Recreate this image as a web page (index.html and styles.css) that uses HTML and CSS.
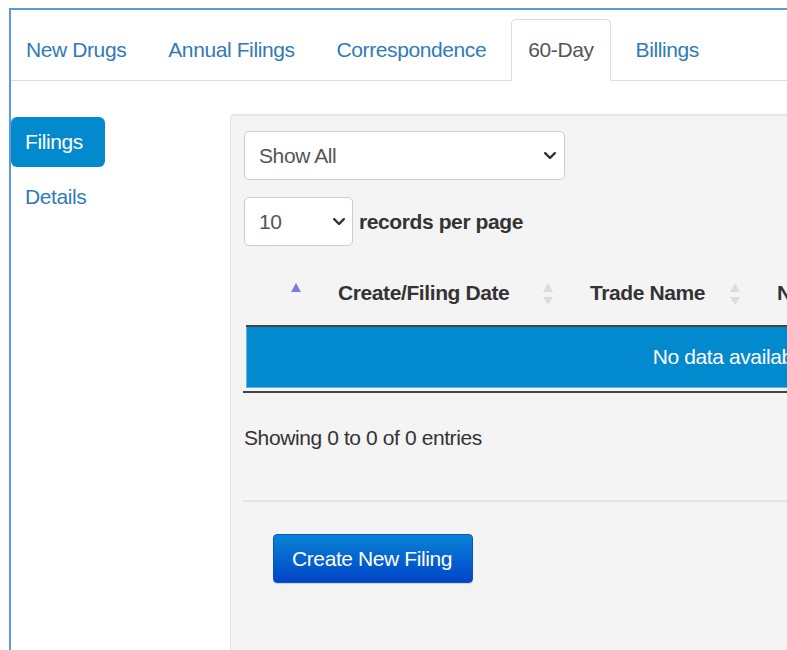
FILE: index.html
```html
<!DOCTYPE html>
<html lang="en">
<head>
<meta charset="utf-8">
<title>60-Day Filings</title>
<link rel="stylesheet" href="styles.css">
</head>
<body>
<div class="frame">
  <ul class="tabs">
    <li><a href="#">New Drugs</a></li>
    <li><a href="#">Annual Filings</a></li>
    <li><a href="#">Correspondence</a></li>
    <li><a href="#" class="active">60-Day</a></li>
    <li><a href="#">Billings</a></li>
  </ul>

  <div class="content">
    <nav class="side">
      <a href="#" class="pill active">Filings</a>
      <a href="#" class="pill">Details</a>
    </nav>

    <section class="well">
      <div class="field field-wide">
        <select class="select">
          <option>Show All</option>
        </select>
        <svg class="chevron" viewBox="0 0 12 8" width="12" height="8"><polyline points="1.2,1.2 6,6 10.8,1.2"/></svg>
      </div>

      <div class="length">
        <div class="field field-short">
          <select class="select">
            <option>10</option>
          </select>
          <svg class="chevron" viewBox="0 0 12 8" width="12" height="8"><polyline points="1.2,1.2 6,6 10.8,1.2"/></svg>
        </div>
        <span class="length-label">records per page</span>
      </div>

      <div class="table-wrap">
        <table class="grid">
          <colgroup>
            <col class="c-sel">
            <col class="c-date">
            <col class="c-name">
            <col>
          </colgroup>
          <thead>
            <tr>
              <th><svg class="sort" viewBox="0 0 12 24" width="12" height="24"><polygon class="asc" points="1,10 6,1 11,10"/></svg></th>
              <th>Create/Filing Date<svg class="sort" viewBox="0 0 12 24" width="12" height="24"><polygon class="off" points="1,10 6,1 11,10"/><polygon class="off" points="1,15 11,15 6,23"/></svg></th>
              <th>Trade Name<svg class="sort" viewBox="0 0 12 24" width="12" height="24"><polygon class="off" points="1,10 6,1 11,10"/><polygon class="off" points="1,15 11,15 6,23"/></svg></th>
              <th>NDC</th>
            </tr>
          </thead>
          <tbody>
            <tr>
              <td colspan="4" class="empty">No data available in table</td>
            </tr>
          </tbody>
        </table>
      </div>

      <div class="info">Showing 0 to 0 of 0 entries</div>

      <hr class="rule">

      <button class="btn-primary" type="button">Create New Filing</button>
    </section>
  </div>
</div>
</body>
</html>
```

FILE: styles.css
```css
html, body {
  margin: 0;
  overflow: hidden;
  background: #fff;
}

body {
  font-family: "Liberation Sans", Arial, sans-serif;
  font-size: 21px;
  line-height: 30px;
  letter-spacing: -0.4px;
  color: #333;
}

a {
  color: #2f7bb8;
  text-decoration: none;
}

/* outer container with the blue top/left rule */
.frame {
  margin: 8px 0 0 9px;
  height: 700px;
  border-top: 2px solid #5b9bd9;
  border-left: 2px solid #5b9bd9;
}

/* tab strip */
.tabs {
  display: flex;
  list-style: none;
  margin: 0;
  padding: 9px 0 0 0;
  border-bottom: 1px solid #ddd;
}

.tabs li {
  margin-bottom: -1px;
  margin-right: 8px;
}

.tabs li:first-child {
  margin-left: -2px;
}

.tabs a {
  display: block;
  padding: 15px 16px 15px;
  border: 1px solid transparent;
  border-radius: 5px 5px 0 0;
  white-space: nowrap;
}

.tabs a.active {
  color: #555;
  background: #fff;
  border-color: #ddd;
  border-bottom-color: #fff;
}

/* body: side nav + main well */
.content {
  display: flex;
  align-items: flex-start;
  padding-top: 33px;
}

.side {
  flex: 0 0 219px;
  padding-top: 3px;
  display: flex;
  flex-direction: column;
  gap: 5px;
}

.pill {
  display: block;
  width: 94px;
  box-sizing: border-box;
  padding: 10px 0 10px 14px;
  border-radius: 6px;
}

.pill.active {
  background: #0389cd;
  color: #fff;
}

.well {
  flex: 0 0 auto;
  width: 1070px;
  min-height: 600px;
  background: #f4f4f4;
  border: 1px solid #e3e3e3;
  border-radius: 4px;
  box-shadow: inset 0 1px 1px rgba(0, 0, 0, 0.05);
  padding: 16px 13px;
}

/* select boxes */
.field {
  position: relative;
}

.field-wide {
  width: 321px;
}

.field-short {
  width: 109px;
}

.select {
  -webkit-appearance: none;
  appearance: none;
  display: block;
  width: 100%;
  height: 49px;
  box-sizing: border-box;
  margin: 0;
  padding: 0 14px;
  border: 1px solid #ccc;
  border-radius: 5px;
  background: #fff;
  font: inherit;
  letter-spacing: inherit;
  color: #555;
}

.chevron {
  position: absolute;
  top: 50%;
  right: 9px;
  margin-top: -4px;
  fill: none;
  stroke: #333;
  stroke-width: 2.4;
  stroke-linecap: round;
  stroke-linejoin: round;
  pointer-events: none;
}

.field-short .chevron {
  right: 8px;
}

.length {
  display: flex;
  align-items: center;
  gap: 6px;
  margin-top: 17px;
}

.length-label {
  font-weight: bold;
  color: #333;
}

/* data table */
.table-wrap {
  margin: 16px 0 0 -1px;
  padding-bottom: 3px;
  border-bottom: 2px solid #444;
}

.grid {
  margin-left: 3px;
  width: 1038px;
  table-layout: fixed;
  border-collapse: separate;
  border-spacing: 0;
}

.c-sel { width: 78px; }
.c-date { width: 252px; }
.c-name { width: 187px; }

.grid th {
  position: relative;
  padding: 16px 0 17px 14px;
  text-align: left;
  font-weight: bold;
  white-space: nowrap;
  overflow: hidden;
  border-bottom: 2px solid #444;
}

.sort {
  position: absolute;
  right: 22px;
  top: 50%;
  margin-top: -12px;
}

.sort .asc { fill: #7c7ce0; }
.sort .off { fill: #dcdcdc; }

.grid td.empty {
  padding: 15px 0;
  text-align: center;
  color: #fff;
  background: #0389cd;
  border-left: 1px solid #5db7e6;
  border-bottom: 1px solid #5db7e6;
}

.info {
  margin-top: 30px;
  color: #333;
}

.rule {
  margin: 47px 0 0 -1px;
  border: 0;
  border-top: 2px solid #e4e4e4;
}

.btn-primary {
  margin: 32px 0 0 29px;
  width: 200px;
  height: 49px;
  padding: 0 18px;
  border: 1px solid #0555c4;
  border-radius: 4px;
  background: linear-gradient(#0a84d6, #0044c8);
  box-shadow: 0 1px 1px rgba(0, 0, 0, 0.15);
  color: #fff;
  font: inherit;
  letter-spacing: inherit;
  text-align: left;
  cursor: pointer;
}
```
